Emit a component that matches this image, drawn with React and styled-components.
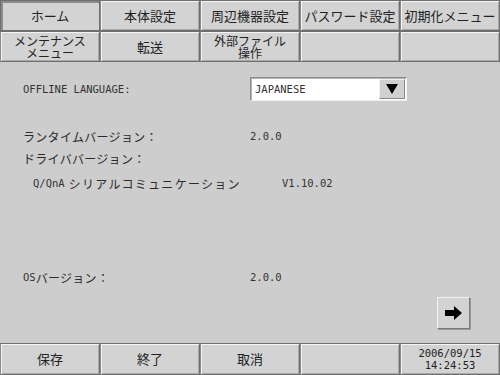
import React from 'react';
import styled, { createGlobalStyle } from 'styled-components';

const GlobalStyle = createGlobalStyle`
  html, body {
    margin: 0;
    padding: 0;
    background: #cdcdcd;
  }
  body {
    font-family: "Noto Sans CJK JP", "DejaVu Sans", sans-serif;
    color: #222;
  }
`;

const Screen = styled.div`
  width: 500px;
  height: 375px;
  background: #cdcdcd;
  display: flex;
  flex-direction: column;
  overflow: hidden;
`;

const ButtonGrid = styled.div`
  display: grid;
  grid-template-columns: repeat(5, 100px);
  grid-auto-rows: ${p => p.$rowHeight || 31}px;
`;

const Key = styled.div`
  box-sizing: border-box;
  display: flex;
  align-items: center;
  justify-content: center;
  text-align: center;
  background: #d3d3d3;
  border: 1px solid #6e6e6e;
  border-left-color: ${p => (p.$pressed ? '#6e6e6e' : '#8a8a8a')};
  box-shadow: ${p =>
    p.$pressed
      ? 'inset 2px 2px 0 #8c8c8c'
      : 'inset 1px 1px 0 #f4f4f4, inset -1px -1px 0 #a9a9a9'};
  font-size: ${p => p.$size || 13}px;
  line-height: ${p => p.$lh || 14}px;
  color: #222;
  white-space: pre-line;
`;

const Mono = styled.span`
  font-family: "DejaVu Sans Mono", "Liberation Mono", monospace;
  font-size: 10.5px;
  letter-spacing: 0;
  color: #333;
`;

const DateText = styled.div`
  font-family: "DejaVu Sans Mono", "Liberation Mono", monospace;
  font-size: 10.5px;
  line-height: 12px;
  color: #222;
`;

const Content = styled.div`
  flex: 1;
  display: flex;
  flex-direction: column;
  padding-left: 23px;
`;

const Row = styled.div`
  display: flex;
  align-items: center;
  height: ${p => p.$h || 18}px;
  margin-top: ${p => p.$top}px;
  padding-left: ${p => p.$indent || 0}px;
`;

const Label = styled.div`
  width: ${p => p.$w || 227}px;
  flex-shrink: 0;
  font-size: 12px;
  letter-spacing: ${p => p.$ls || 0.3}px;
  color: #2a2a2a;
  display: flex;
  align-items: center;
`;

const Select = styled.div`
  box-sizing: border-box;
  width: 157px;
  height: 24px;
  display: flex;
  background: #fff;
  border: 1px solid #8c8c8c;
  border-right-color: #f0f0f0;
  border-bottom-color: #f0f0f0;
  box-shadow: inset 1px 1px 0 #b4b4b4;
`;

const SelectValue = styled.div`
  flex: 1;
  display: flex;
  align-items: center;
  padding-left: 4px;
`;

const SelectArrow = styled.div`
  width: 26px;
  margin: 1px 1px 1px 0;
  box-sizing: border-box;
  background: #d0d0d0;
  border: 1px solid #f2f2f2;
  border-right-color: #8a8a8a;
  border-bottom-color: #8a8a8a;
  display: flex;
  align-items: center;
  justify-content: center;
`;

const NavRow = styled.div`
  display: flex;
  justify-content: flex-end;
  padding-right: 30px;
  margin-top: 11px;
`;

const NavButton = styled.div`
  box-sizing: border-box;
  width: 33px;
  height: 32px;
  background: #d3d3d3;
  border: 1px solid #f2f2f2;
  border-right-color: #7a7a7a;
  border-bottom-color: #7a7a7a;
  box-shadow: 1px 1px 0 #9a9a9a;
  display: flex;
  align-items: center;
  justify-content: center;
`;

const Footer = styled(ButtonGrid)`
  margin-top: auto;
`;

export default function App() {
  return (
    <Screen>
      <GlobalStyle />
      <ButtonGrid>
        <Key $pressed>ホーム</Key>
        <Key>本体設定</Key>
        <Key>周辺機器設定</Key>
        <Key>パスワード設定</Key>
        <Key>初期化メニュー</Key>
        <Key $size={12} $lh={12}>{'メンテナンス\nメニュー'}</Key>
        <Key>転送</Key>
        <Key $size={12} $lh={12}>{'外部ファイル\n操作'}</Key>
        <Key />
        <Key />
      </ButtonGrid>

      <Content>
        <Row $top={15} $h={24}>
          <Label><Mono>OFFLINE LANGUAGE:</Mono></Label>
          <Select>
            <SelectValue><Mono>JAPANESE</Mono></SelectValue>
            <SelectArrow>
              <svg width="12" height="10" viewBox="0 0 12 10">
                <polygon points="0,0 12,0 6,10" fill="#000" />
              </svg>
            </SelectArrow>
          </Select>
        </Row>
        <Row $top={26}>
          <Label>ランタイムバージョン：</Label>
          <Mono>2.0.0</Mono>
        </Row>
        <Row $top={4}>
          <Label>ドライババージョン：</Label>
        </Row>
        <Row $top={7} $indent={10}>
          <Label $w={249} $ls={1.3}>
            <Mono>Q/QnA</Mono>&nbsp;シリアルコミュニケーション
          </Label>
          <Mono>V1.10.02</Mono>
        </Row>
        <Row $top={76}>
          <Label>
            <Mono>OS</Mono>バージョン：
          </Label>
          <Mono>2.0.0</Mono>
        </Row>
        <NavRow>
          <NavButton>
            <svg width="17" height="14" viewBox="0 0 17 14">
              <polygon points="0,4 9,4 9,0 17,7 9,14 9,10 0,10" fill="#000" />
            </svg>
          </NavButton>
        </NavRow>
      </Content>

      <Footer $rowHeight={32}>
        <Key>保存</Key>
        <Key>終了</Key>
        <Key>取消</Key>
        <Key />
        <Key>
          <DateText>
            2006/09/15
            <br />
            14:24:53
          </DateText>
        </Key>
      </Footer>
    </Screen>
  );
}
